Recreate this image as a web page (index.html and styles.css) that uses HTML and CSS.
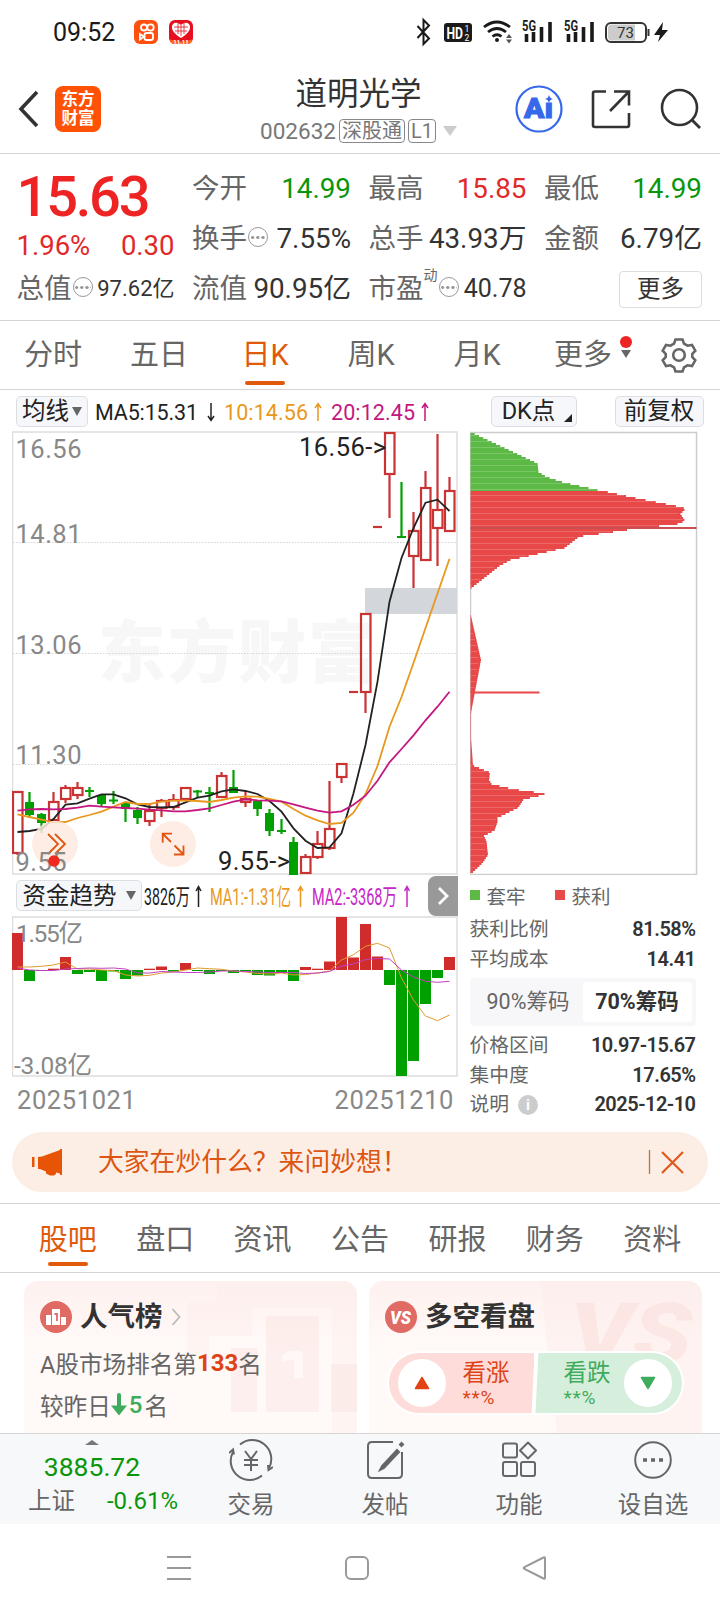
FILE: index.html
```html
<!DOCTYPE html>
<html lang="zh-CN">
<head>
  <meta charset="UTF-8">
  <meta name="viewport" content="width=device-width, initial-scale=1.0">
  <title>道明光学 002632</title>
  <link rel="stylesheet" href="styles.css">
  <script src="script.js" defer></script>
</head>
<body>
  <!-- 状态栏 -->
  <div class="status">
    <span class="time">09:52</span>
    <svg class="app-icons" width="60" height="26" viewBox="134 19 60 26">
      <rect x="134" y="20" width="24" height="24" rx="6" fill="#ff5010"/>
      <g fill="none" stroke="#fff" stroke-width="1.8">
        <circle cx="144" cy="27.5" r="3"/><circle cx="150.5" cy="27.5" r="3.2"/>
        <rect x="144.5" y="33" width="8.5" height="7" rx="2"/><path d="M144 36.5l-4-2.5v5.500z"/>
      </g>
      <rect x="169" y="20" width="24" height="24" rx="6" fill="#e60f1e"/>
      <path d="M181 38c-14-8-9-17-3.500-15 2 .5 3.500 2 3.500 2s1.500-1.500 3.500-2c5.500-2 10.500 7-3.500 15z" fill="#fff"/>
      <path d="M174 27h14M175 31h12M178 23v11M184 23v11M181 25v11" stroke="#e60f1e" stroke-width=".8"/>
      <path d="M170 39.500q11 4 22 0q0 4.500-5 4.500h-12q-5 0-5-4.500z" fill="#ff6a1c"/>
      <text x="181" y="43.500" font-size="6" font-weight="700" fill="#fff" text-anchor="middle">11.11</text>
    </svg>
    <svg class="sys-icons" width="256" height="34" viewBox="414 15 256 34">
      <path d="M417.500 26l11.500 12.500-5.500 5.500v-24l5.500 5.500-11.500 12.500" fill="none" stroke="#1a1a1a" stroke-width="2"/>
      <rect x="444" y="23" width="28" height="19" rx="3" fill="#1a1a1a"/>
      <text x="446.500" y="38.500" font-size="16" font-weight="700" fill="#fff" textLength="16.500" lengthAdjust="spacingAndGlyphs">HD</text>
      <text x="464.500" y="32" font-size="8.500" fill="#fff">1</text>
      <text x="464.500" y="41" font-size="8.500" fill="#fff">2</text>
      <g fill="none" stroke="#1a1a1a" stroke-width="2.800">
        <path d="M484 27q13-10 26 0"/><path d="M488 32q9-7 18 0"/><path d="M492.500 36.500q4.500-3.500 9 0"/>
      </g>
      <circle cx="497" cy="40" r="2" fill="#1a1a1a"/>
      <path d="M506 38l3-4 3 4zM506 39.500l3 4 3-4z" fill="#555"/>
      <g id="sig">
        <text x="522" y="31" font-size="14" font-weight="700" fill="#1a1a1a" textLength="14" lengthAdjust="spacingAndGlyphs">5G</text>
        <path d="M526.500 34v8M533.500 32v10M541.500 27v15M550 22v20" stroke="#1a1a1a" stroke-width="3.600"/>
      </g>
      <use href="#sig" x="42"/>
      <rect x="606" y="23" width="40" height="19" rx="5" fill="#fff" stroke="#333" stroke-width="2"/>
      <path d="M608 28q0-3.500 3.500-3.500h23.500v16h-23.500q-3.500 0-3.500-3.500z" fill="#ccc"/>
      <path d="M648.500 29v7" stroke="#333" stroke-width="2"/>
      <text x="617" y="38" font-size="15" fill="#333" textLength="17">73</text>
      <path d="M663 22l-9 13h6l-2 7 10-12h-6z" fill="#1a1a1a"/>
    </svg>
  </div>

  <!-- 顶部标题 -->
  <header class="header">
    <svg class="back" width="24" height="40" viewBox="0 0 24 40"><path d="M20 3L4 20 20 37" fill="none" stroke="#333" stroke-width="3.600"/></svg>
    <div class="logo">东方<br>财富</div>
    <div class="title">
      <h1>道明光学</h1>
      <div class="code">002632<span class="tag">深股通</span><span class="tag l1">L1</span><i class="tri"></i></div>
    </div>
    <svg width="194" height="50" viewBox="514 84 194 50" fill="none">
      <circle cx="539" cy="109" r="22.500" stroke="#3668ea" stroke-width="2.200"/>
      <text x="524" y="118" font-size="27" font-weight="900" fill="#3668ea" stroke="#3668ea" textLength="29" lengthAdjust="spacingAndGlyphs">Aı</text>
      <path d="M549 95q.8 3.500 4 4-3.200.5-4 4-.8-3.500-4-4 3.200-.5 4-4z" fill="#3668ea"/>
      <path d="M606 91.500h-11q-2 0-2 2v31.500q0 2 2 2h32q2 0 2-2v-12M614 91.500h15v14M628.500 92l-18.500 19" stroke="#333" stroke-width="2.600"/>
      <circle cx="679.500" cy="107.500" r="17.500" stroke="#333" stroke-width="2.600"/>
      <path d="M692 120l8 8" stroke="#333" stroke-width="2.800"/>
    </svg>
  </header>

  <!-- 行情数据 -->
  <section class="quote">
    <div class="price">
      <b>15.63</b>
      <p><span>1.96%</span><span>0.30</span></p>
    </div>
    <div class="cell"><label>今开</label><em class="green">14.99</em></div>
    <div class="cell"><label>最高</label><em class="red">15.85</em></div>
    <div class="cell"><label>最低</label><em class="green">14.99</em></div>
    <div class="cell"><label>换手<i class="dots"></i></label><em>7.55%</em></div>
    <div class="cell"><label>总手</label><em>43.93万</em></div>
    <div class="cell"><label>金额</label><em>6.79亿</em></div>
    <div class="cell"><label>总值<i class="dots"></i></label><em class="small">97.62亿</em></div>
    <div class="cell"><label>流值</label><em>90.95亿</em></div>
    <div class="cell"><label>市盈<sup>动</sup><i class="dots"></i></label><em class="mid">40.78</em></div>
    <div class="cell end"><button class="more">更多</button></div>
  </section>

  <!-- 周期 -->
  <nav class="period">
    <a>分时</a>
    <a>五日</a>
    <a class="on">日K</a>
    <a>周K</a>
    <a>月K</a>
    <a>更多<i class="tri"></i><i class="dot"></i></a>
    <svg width="36" height="36" viewBox="-18 -18 36 36" fill="none" stroke="#666" stroke-width="2.600">
      <path d="M-3.500-15.500h7l1.500 4.200 3.500 2 4.500-.8 3.300 5.800-3 3.300v3l3 3.300-3.300 5.800-4.500-.8-3.500 2-1.500 4.200h-7l-1.500-4.200-3.500-2-4.500.8-3.300-5.800 3-3.300v-3l-3-3.300 3.300-5.800 4.500.8 3.500-2z"/>
      <circle r="5.800"/>
    </svg>
  </nav>

  <!-- K线 + 筹码 -->
  <main class="charts">
    <div class="left">
      <div class="bar ma">
        <button class="pick">均线<i class="tri"></i></button>
        <svg width="346" height="30" viewBox="92 396 346 30" font-size="21.500">
          <text x="95" y="419.500" fill="#222" textLength="103">MA5:15.31</text>
          <text x="224" y="419.500" fill="#e8981e" textLength="84">10:14.56</text>
          <text x="331" y="419.500" fill="#c4177f" textLength="84">20:12.45</text>
          <path d="M211 403v17M208 416l3 4.500 3-4.500" fill="none" stroke="#222" stroke-width="1.500"/>
          <path d="M318 421v-17M315 408l3-4.500 3 4.500" fill="none" stroke="#e8981e" stroke-width="1.500"/>
          <path d="M425 421v-17M422 408l3-4.500 3 4.500" fill="none" stroke="#c4177f" stroke-width="1.500"/>
        </svg>
      </div>
      <svg class="kline" width="446" height="444" viewBox="12 431 446 444">
        <text class="mark" x="98" y="677">东方财富</text>
        <path d="M13 542.500h444M13 653.500h444M13 764.500h444" stroke="#d4d4d4" stroke-dasharray="1.500 1.500"/>
        <rect x="12.500" y="432" width="444.500" height="442" fill="none" stroke="#ddd" stroke-width="1.500"/>
        <rect x="365" y="588" width="92" height="26" fill="#d3d6db"/>
        <g id="candles"></g>
        <g id="lines"></g>
        <g fill="#e0550f">
          <circle cx="55" cy="844" r="23" fill="#fdeadf" fill-opacity=".85"/>
          <circle cx="173" cy="844" r="23" fill="#fdeadf" fill-opacity=".85"/>
          <path d="M48 834l10 10-10 10M55 834l10 10-10 10M172 833.700h-9.300v9M163 834l8 8M174 854.500h9.500v-9M183 854l-8.500-8.500" fill="none" stroke="#e0550f" stroke-width="1.800"/>
        </g>
        <g class="axis">
          <text x="15.500" y="458" textLength="66">16.56</text>
          <text x="15.500" y="543" textLength="66">14.81</text>
          <text x="15.500" y="654" textLength="66">13.06</text>
          <text x="15.500" y="764" textLength="66">11.30</text>
          <text x="15.500" y="870.500" textLength="51">9.55</text>
        </g>
        <circle cx="54" cy="861" r="5.700" fill="#f0281e"/>
        <text x="299" y="456" font-size="25.500" fill="#222" textLength="87">16.56-&gt;</text>
        <text x="218" y="869.500" font-size="25.500" fill="#222" textLength="72">9.55-&gt;</text>
      </svg>
      <div class="bar fund">
        <button class="pick">资金趋势<i class="tri"></i></button>
        <svg width="286" height="34" viewBox="142 879 286 34" font-size="23">
          <text x="144" y="904.500" fill="#222" textLength="46" lengthAdjust="spacingAndGlyphs">3826万</text>
          <text x="210" y="904.500" fill="#e8981e" textLength="81" lengthAdjust="spacingAndGlyphs">MA1:-1.31亿</text>
          <text x="312" y="904.500" fill="#c726c7" textLength="85" lengthAdjust="spacingAndGlyphs">MA2:-3368万</text>
          <path d="M198.500 907v-20M196 891l2.500-4.500 2.500 4.500" fill="none" stroke="#222" stroke-width="1.500"/>
          <path d="M300.500 907v-20M298 891l2.500-4.500 2.500 4.500" fill="none" stroke="#e8981e" stroke-width="1.500"/>
          <path d="M407 907v-20M404.500 891l2.500-4.500 2.500 4.500" fill="none" stroke="#c726c7" stroke-width="1.500"/>
        </svg>
        <button class="next"><svg width="14" height="22" viewBox="0 0 14 22"><path d="M3 3l8 8-8 8" fill="none" stroke="#fff" stroke-width="2.800"/></svg></button>
      </div>
      <svg class="flow" width="446" height="161" viewBox="12 916 446 161">
        <rect x="12.500" y="917" width="444.500" height="159" fill="none" stroke="#ddd" stroke-width="1.500"/>
        <g id="bars"></g>
        <g class="axis">
          <text x="16" y="942" textLength="67">1.55亿</text>
          <text x="14" y="1073.500" textLength="78">-3.08亿</text>
        </g>
      </svg>
      <div class="dates"><span>20251021</span><span>20251210</span></div>
    </div>

    <div class="right">
      <div class="bar opts">
        <button class="pick dk">DK点<i class="corner"></i></button>
        <button class="pick">前复权</button>
      </div>
      <svg id="chips" width="228" height="444" viewBox="469.500 431 228 444"></svg>
      <div class="legend"><span><i class="sq g"></i>套牢</span><span><i class="sq"></i>获利</span></div>
      <div class="row"><span>获利比例</span><b>81.58%</b></div>
      <div class="row"><span>平均成本</span><b>14.41</b></div>
      <div class="seg"><span>90%筹码</span><span class="on">70%筹码</span></div>
      <div class="row"><span>价格区间</span><b>10.97-15.67</b></div>
      <div class="row"><span>集中度</span><b>17.65%</b></div>
      <div class="row"><span>说明<i class="info">i</i></span><b>2025-12-10</b></div>
    </div>
  </main>

  <!-- 公告条 -->
  <div class="banner">
    <svg width="32" height="30" viewBox="31 1147 32 30" fill="#e85406">
      <path d="M32 1157h2.500v10h-2.500zM38 1157l4-.5 18-6.500v-1h2v26h-2v-1.500l-4-1v1.500l-2 1.500h-4l-4-2v-2l-6-2.500h-2z"/>
    </svg>
    <p>大家在炒什么？来问妙想！</p>
    <svg width="36" height="26" viewBox="648 1149 36 26" stroke="#e0591c" fill="none">
      <path d="M649.500 1150v24" stroke="#c4703a" stroke-width="1.300"/><path d="M662 1152l21 21M683 1152l-21 21" stroke-width="2.200"/>
    </svg>
  </div>

  <nav class="tabs">
    <a class="on">股吧</a>
    <a>盘口</a>
    <a>资讯</a>
    <a>公告</a>
    <a>研报</a>
    <a>财务</a>
    <a>资料</a>
  </nav>

  <!-- 卡片 -->
  <section class="cards">
    <div class="card">
      <svg class="bg" width="333" height="152" viewBox="24 1281 333 152" fill="#f9dcda">
        <path d="M187 1301h30v-20h140v152h-25v-125h-80v28h-43v20h-22z" fill="#fdeae8" opacity=".35"/>
        <path d="M266 1316h53v96h-53zM231 1348h26v64h-26zM331 1364h26v48h-26z" opacity=".38"/>
        <path d="M288 1351h10q5 0 5 4v23h-9v-19l-12 3v-6z" fill="#fff8f6"/>
      </svg>
      <h2>
        <svg width="32" height="32" viewBox="0 0 32 32"><circle cx="16" cy="16" r="16" fill="#e06a64"/><path d="M6 14h5v10h-5zM12 8h8v16h-8zM21 16h5v8h-5z" fill="#fff"/><path d="M14.500 13h2.500v7" fill="none" stroke="#e06a64" stroke-width="1.800"/></svg>
        人气榜
        <svg width="10" height="18" viewBox="0 0 10 18"><path d="M1.500 1l7 8-7 8" fill="none" stroke="#bbb" stroke-width="1.800"/></svg>
      </h2>
      <p>A股市场排名第<b>133</b>名</p>
      <p>较昨日<svg width="16" height="24" viewBox="0 0 16 24"><path d="M8 2v14" stroke="#3eac5c" stroke-width="4" stroke-linecap="round"/><path d="M0 12.500h16l-8 10z" fill="#3eac5c"/></svg><b class="down">5</b>名</p>
    </div>
    <div class="card">
      <svg class="bg" width="333" height="152" viewBox="369 1281 333 152">
        <path d="M540 1281h162v152h-145z" fill="#fdeae8" opacity=".45"/>
        <text x="570" y="1362" font-size="84" font-weight="900" font-style="italic" fill="#f9dcda" opacity=".5" textLength="122" lengthAdjust="spacingAndGlyphs">VS</text>
      </svg>
      <h2>
        <svg width="32" height="32" viewBox="0 0 32 32"><circle cx="16" cy="16" r="16" fill="#e06a64"/><text x="5" y="22.500" font-size="18" font-weight="900" font-style="italic" fill="#fff" textLength="21" lengthAdjust="spacingAndGlyphs">VS</text></svg>
        多空看盘
      </h2>
      <div class="vote">
        <div class="rise">
          <i><svg width="16" height="14" viewBox="0 0 16 14"><path d="M8 1.500l6.500 11h-13z" fill="#e24314" stroke="#e24314" stroke-width="1.500" stroke-linejoin="round"/></svg></i>
          <span>看涨<small>**%</small></span>
        </div>
        <div class="fall">
          <span>看跌<small>**%</small></span>
          <i><svg width="16" height="14" viewBox="0 0 16 14"><path d="M8 12.500l6.500-11h-13z" fill="#3eac5c" stroke="#3eac5c" stroke-width="1.500" stroke-linejoin="round"/></svg></i>
        </div>
      </div>
    </div>
  </section>

  <!-- 底部导航 -->
  <footer class="bottom">
    <div class="index">
      <i class="up"></i>
      <b>3885.72</b>
      <p>上证<span>-0.61%</span></p>
    </div>
    <a><svg width="44" height="42" viewBox="-22 -21 44 42"><path d="M-11-15.500A19 19 0 0 1 18 8M11 15.500A19 19 0 0 1-18-8M-22-7l4-3.500 1 5M22 7l-4.500 3-.5-5" /><path d="M-6-9l6 8 6-8M0-1v12M-7 0H7M-7 5H7"/></svg>交易</a>
    <a><svg width="44" height="42" viewBox="-22 -21 44 42"><path d="M8-18h-21q-4 0-4 4v28q0 4 4 4h26q4 0 4-4v-22"/><path d="M12-10l-15 16-2 4 4-2 15-16z" fill="#666"/><path d="M15-14l3-3" stroke-width="4"/></svg>发帖</a>
    <a><svg width="44" height="42" viewBox="-22 -21 44 42"><rect x="-16" y="-16.500" width="14" height="14" rx="2"/><rect x="-16" y="2" width="14" height="14" rx="2"/><rect x="2" y="2" width="14" height="14" rx="2"/><path d="M9-17.500l8 8-8 8-8-8z" stroke-linejoin="round"/></svg>功能</a>
    <a><svg width="44" height="42" viewBox="-22 -21 44 42"><circle r="17.800"/><path d="M-10 0h4M-2 0h4M6 0h4" stroke-width="3.600"/></svg>设自选</a>
  </footer>
  <div class="sysnav">
    <svg width="26" height="26" viewBox="0 0 26 26"><path d="M1 2h24M1 13h24M1 24h24"/></svg>
    <svg width="26" height="26" viewBox="0 0 26 26"><rect x="2" y="2" width="22" height="22" rx="5"/></svg>
    <svg width="26" height="26" viewBox="0 0 26 26"><path d="M22.500 2.500q1.500-.8 1.500 1v19q0 1.800-1.500 1l-19-9.500q-1.500-1 0-2z"/></svg>
  </div>
</body>
</html>
```
FILE: styles.css
```css
*{
  box-sizing: border-box; margin: 0; padding: 0;
}
body{
  width: 720px; height: 1612px; overflow: hidden;
  display: flex; flex-direction: column;
  font-family: Roboto, "Noto Sans CJK SC", sans-serif;
  color: #333; background-color: #fff;
}
svg{
  display: block; flex: none;
}
button{
  font: inherit; color: inherit; border: 0; background: none;
}
i, em{
  font-style: normal;
}
.red{ color: #e02a2a; }
.green{ color: #0a960a; }
.tri{
  display: inline-block; width: 0; height: 0;
  border: 5px solid transparent; border-top: 9px solid #666; border-bottom: 0;
}

/* 状态栏 */
.status{
  height: 64px; padding: 0 50px 0 53px;
  display: flex; align-items: center;
}
.time{
  width: 81px; padding-top: 2px; font-size: 25px; line-height: 30px; color: #1a1a1a;
}
.sys-icons{
  margin-left: auto;
}

/* 标题 */
.header{
  height: 90px; padding: 0 12px 0 17px;
  display: flex; align-items: center;
  border-bottom: 1px solid #d5d5d5;
}
.logo{
  width: 46px; height: 46px; margin-left: 14px; padding-top: 4px;
  border-radius: 8px; background-color: #ff5207; color: #fff;
  font-size: 16.500px; font-weight: bold; line-height: 19px; text-align: center;
}
.title{
  flex: 1; padding: 4px 0 0 102px;
  display: flex; flex-direction: column; align-items: center;
}
.title h1{
  font-size: 31.500px; font-weight: normal; line-height: 40px;
}
.code{
  display: flex; align-items: center; height: 32px;
  font-size: 22.500px; color: #777; white-space: nowrap;
}
.tag{
  height: 24px; margin-left: 3px; padding: 0 2px;
  border: 1.500px solid #888; border-radius: 4px;
  font-size: 20px; line-height: 22px;
}
.code .tri{
  margin-left: 7px; border-width: 10px 7px 0; border-top-color: #ccc;
}

/* 行情 */
.quote{
  height: 167px; padding: 10px 16px 0 16.500px;
  display: grid; grid-template-columns: 158px 159px 158px 158px;
  grid-auto-rows: 50px; column-gap: 17.500px;
  border-bottom: 1px solid #d5d5d5;
}
.price{
  grid-row: span 2; color: #e02a2a;
}
.price b{
  display: block; height: 60px; padding-top: 3px;
  font-size: 56px; font-weight: 500; line-height: 60px; color: #ee2424;
  letter-spacing: -2.200px;
}
.price p{
  display: flex; justify-content: space-between;
  margin-top: 5px; font-size: 27.500px; line-height: 34px;
}
.cell{
  display: flex; align-items: center; justify-content: space-between;
  white-space: nowrap; line-height: 36px;
}
.cell label{
  display: flex; align-items: center;
  font-size: 27.500px; color: #666;
}
.cell em{
  font-size: 27.800px;
}
.cell em.small{ font-size: 22px; }
.cell em.mid{ font-size: 25px; }
.cell.end{
  justify-content: flex-end;
}
.cell sup{
  font-size: 14px; line-height: 14px; align-self: flex-start; margin-top: -3px;
}
.dots{
  width: 20px; height: 20px; margin: -4px 0 0 1px;
  border: 1.500px solid #999; border-radius: 50%;
  background: radial-gradient(circle, #999 1.300px, transparent 1.800px) 0 50% / 5.200px 5px repeat-x content-box;
  padding: 0 0.700px;
}
.more{
  width: 83px; height: 37px; border: 1px solid #ddd; border-radius: 4px;
  font-size: 23.500px; line-height: 34px;
}

/* 周期 */
.period{
  height: 69px; display: flex; align-items: center;
  border-bottom: 1px solid #d5d5d5;
  font-size: 29px; line-height: 72px; color: #666;
}
.period a{
  width: 106px; text-align: center;
}
.period a, .tabs a{
  position: relative;
}
.period svg{
  margin-left: 25px;
}
.period .on, .tabs .on{
  color: #e15a0c;
}
.period .on::after, .tabs .on::after{
  content: ""; position: absolute; left: 50%; bottom: 6px;
  width: 40px; height: 4px; margin-left: -20px;
  border-radius: 2px; background-color: #e15a0c;
}
.period .tri{
  position: absolute; right: 17px; top: 31px; margin-right: -12px; border-width: 8px 5px 0;
}
.dot{
  position: absolute; right: 5px; top: 17px; margin-right: -1px;
  width: 12px; height: 12px; border-radius: 50%; background-color: #ee2424;
}

/* 图表 */
.charts{
  display: flex; height: 742px; padding-left: 12px;
}
.left{
  width: 446px;
}
.right{
  width: 235px; margin-left: 11.500px;
}
.bar{
  height: 41px; display: flex; align-items: center;
}
.pick{
  height: 31px; border: 1px solid #dcdee2; border-radius: 5px;
  background-color: #f6f7fa; color: #222;
  display: flex; align-items: center; justify-content: center;
  font-size: 23.500px; line-height: 28px; white-space: nowrap;
}
.ma, .opts{
  padding-top: 1px;
}
.ma .pick{
  width: 72px; margin: 0 4px;
}
.ma .tri{
  margin-left: 3px;
}
.axis text{
  font-size: 25.500px; fill: #888;
}
.flow .axis text{
  font-size: 24.500px;
}
.mark{
  font-size: 68px; font-weight: 900; fill: #f7f7f7; letter-spacing: 2px;
}
.fund .pick{
  width: 126px; margin: 0 0 0 4px;
}
.fund .tri{
  margin-left: 9px;
}
.next{
  width: 30px; height: 40px; border-radius: 8px 0 0 8px; background-color: #999;
  display: flex; align-items: center; justify-content: center;
}
.dates{
  display: flex; justify-content: space-between;
  padding: 6px 4px 0 5px; font-size: 25.500px; line-height: 34px;
  letter-spacing: .6px; color: #888;
}
.opts{
  padding-right: 1px; justify-content: space-between;
}
.dk{
  position: relative; width: 86px; margin-left: 21px; padding-right: 10px;
}
.opts .pick:last-child{
  width: 89px; margin-right: 0;
}
.corner{
  position: absolute; right: 4px; bottom: 4px;
  border-left: 8px solid transparent; border-bottom: 8px solid #222;
}
.legend{
  display: flex; height: 40px; align-items: center;
  font-size: 19.500px; color: #666;
}
.legend span{
  width: 85px; display: flex; align-items: center;
}
.sq{
  width: 10px; height: 10px; margin-right: 7px; background-color: #e84848;
}
.sq.g{
  background-color: #5cb946;
}
.row{
  width: 226px; height: 29.500px; display: flex; align-items: center; justify-content: space-between;
  font-size: 19.800px; line-height: 29px; color: #666;
}
.row span{
  display: flex; align-items: center;
}
.row b{
  font-size: 20px; font-weight: 600; letter-spacing: -.5px; color: #333;
}
.info{
  width: 20px; height: 20px; margin-left: 9px; border-radius: 50%;
  background-color: #ccc; color: #fff;
  font-size: 15px; font-weight: bold; line-height: 20px; text-align: center;
}
.seg{
  width: 226px; height: 48px; margin: 4px 0 5px; padding: 4px;
  display: flex; border-radius: 4px; background-color: #f7f7fa;
  font-size: 21.500px; line-height: 40px; text-align: center; color: #666;
}
.seg span{
  flex: 1; white-space: nowrap;
}
.seg .on{
  border-radius: 4px; background-color: #fff; color: #333; font-weight: bold;
}

/* 公告条 */
.banner{
  height: 60px; margin: 0 12px 11px; padding: 0 24px 0 19px;
  display: flex; align-items: center;
  border-radius: 30px; background-color: #fceee5;
}
.banner p{
  flex: 1; margin-left: 35px; font-size: 25.800px; line-height: 36px; color: #dd5510;
}

.tabs{
  height: 70px; padding: 0 19px;
  display: flex; border: 1px solid #d5d5d5; border-width: 1px 0;
  font-size: 29px; line-height: 73px; color: #666;
}
.tabs a{
  flex: 1; text-align: center;
}

/* 卡片 */
.cards{
  height: 160px; padding: 8px 18px 0 24px; overflow: hidden;
  display: flex; gap: 12px;
}
.card{
  position: relative; width: 333px; height: 170px; padding: 16px;
  border-radius: 14px; overflow: hidden;
  background: linear-gradient(#fef1ef, #fffaf8 70px);
}
.bg{
  position: absolute; left: 0; top: 0;
}
.card h2{
  position: relative; display: flex; align-items: center; gap: 8px;
  height: 40px; font-size: 27.500px; line-height: 42px;
}
.card p{
  position: relative; display: flex; align-items: center;
  height: 42px; font-size: 23.600px; color: #666;
}
.card h2 + p{
  margin-top: 5px;
}
.card b{
  font-size: 24px; font-weight: bold; color: #dd4315;
}
.card b.down{
  margin: 0 2px; font-weight: 500; color: #3eac5c;
}
.vote{
  position: relative; display: flex; width: 297px; height: 64px; margin: 14px 0 0 2px;
  border: 2px solid #fff; border-radius: 32px; overflow: hidden; background-color: #fff;
}
.rise, .fall{
  display: flex; align-items: center; justify-content: space-between;
  width: 147px; height: 60px; padding: 0 25px 0 9px;
  background-color: #fddcda; color: #dd4315;
  clip-path: polygon(0 0, 100% 0, 98% 100%, 0 100%);
}
.fall{
  width: 148px; padding: 0 10px 0 28px; margin-left: 1px;
  background-color: #d6efdc; color: #3eac5c;
  clip-path: polygon(2% 0, 100% 0, 100% 100%, 0 100%);
}
.vote i{
  width: 48px; height: 48px; border-radius: 50%; background-color: #fff;
  display: flex; align-items: center; justify-content: center;
}
.vote span{
  font-size: 23.500px; line-height: 30px;
}
.vote small{
  display: block; font-size: 19px; line-height: 20px; letter-spacing: .8px;
}

/* 底部 */
.bottom{
  height: 91px; display: flex;
  border-top: 1px solid #d5d5d5; background-color: #f7f8fa; color: #666;
}
.index{
  width: 184px; padding-top: 6px; text-align: center;
}
.up{
  display: block; width: 0; margin: 0 auto;
  border: 7px solid transparent; border-bottom: 5px solid #777; border-top: 0;
}
.index b{
  display: block; margin-top: 6px; font-size: 26.500px; font-weight: normal; line-height: 32px; color: #0a960a;
}
.index p{
  display: flex; justify-content: space-between; padding: 0 6px 0 28px;
  font-size: 23.500px; line-height: 36px;
}
.index span{
  font-size: 24px; color: #0a960a;
}
.bottom a{
  width: 134px; padding-top: 5px;
  display: flex; flex-direction: column; align-items: center;
  font-size: 23.500px; line-height: 48px;
}
.bottom a svg{
  fill: none; stroke: #666; stroke-width: 2;
}
.sysnav{
  flex: 1; display: flex; justify-content: space-between;
  padding: 31px 173px 0 166px;
}
.sysnav svg{
  fill: none; stroke: #999; stroke-width: 2;
}
```
FILE: script.js
```js
const RED = "#c93333";
const GREEN = "#00a000";
const STEP = 12;
const X0 = 17.5;

/* K线: [颜色, 最高, 实体上, 实体下, 最低] */
const candles = [
  ["r", 792, 792, 853, 855], ["g", 792, 802, 815, 818], ["g", 813, 814, 823, 833],
  ["r", 792, 802, 820, 820], ["r", 785, 788, 799, 803], ["r", 782, 788, 795, 799],
  ["g", 787, 790, 792, 797], ["g", 794, 795, 804, 806], ["g", 791, 800, 801, 804],
  ["g", 802, 803, 809, 822], ["g", 807, 810, 818, 824], ["r", 803, 811, 821, 826],
  ["r", 799, 801, 808, 817], ["r", 794, 800, 807, 810], ["r", 787, 788, 799, 799],
  ["g", 790, 791, 792, 797], ["g", 787, 792, 794, 812], ["r", 772, 776, 797, 797],
  ["g", 770, 787, 793, 793], ["r", 792, 799, 802, 807], ["g", 801, 801, 809, 816],
  ["g", 809, 813, 831, 836], ["g", 819, 830, 832, 834], ["g", 837, 842, 875, 875],
  ["r", 854, 857, 873, 873], ["r", 831, 844, 857, 859], ["r", 781, 829, 848, 850],
  ["r", 764, 764, 777, 783], ["r", 692, 692, 692, 692], ["r", 614, 614, 692, 713],
  ["r", 527, 527, 527, 527], ["r", 433, 433, 474, 518], ["g", 482, 536, 538, 538],
  ["r", 512, 531, 556, 588], ["r", 471, 488, 560, 560], ["r", 434, 510, 528, 566],
  ["r", 477, 491, 531, 531]
];
const ma5 = [832,831,829,819,804.7,803.3,798.7,794.3,794.3,798.3,804.3,807,807.3,807,802.3,797.7,795.7,791.3,789.3,791,794,801,811.7,828.3,840.7,848,847.3,833.3,793.3,745,681.7,601.7,558,528,502.7,499.7,511];
const ma10 = [814.3,817,819.7,822.3,822,818,815,811.7,806.7,802,804,804,801.7,800.7,800.7,801,802,800,797.7,796.3,796.7,799,801.7,809,815.7,820.3,824,823,812.7,794,766,726.7,697,663,628,593.5,558.7];
const ma20 = [810.7,809.3,809,809.3,809,807.7,805.7,806.7,807.3,808,808.7,809.7,810.3,811.3,811.3,810,808.3,805,801.7,799.3,800.3,800.7,801.3,804.3,807.7,810.7,812.7,811.3,804.7,795.7,780.7,762.3,749,735.3,720.3,706.7,691.7];

/* 资金趋势 */
const ZERO = 970;
const flow = [933,981,971,968.7,957,974,972,981,971.5,979,975.5,968.7,966.5,971.5,963,971,974,971,973,971.5,975,975.5,973,981,967,968.7,961.5,917,957.5,924,956.5,985,1076,1061,1004,978,957];
const flow1 = [967,967,966.3,965,962,969,969,970,970.5,975,976,975.3,973,972,970,968,968.7,969.3,971,972,973.5,974,973,975,974.5,973,971,960,954.7,946.3,943.3,948,978,1000,1016,1020.7,1015];
const flow2 = [968,970,970.5,970.5,969,968.5,968,968.3,968,969,973,973,971.5,972,972.5,972.5,972,971,971,971.5,972,972.5,972.5,972.5,973.5,973,971.5,966,964,959.5,958.5,959,970,977,981.3,982.3,981.3];

/* 筹码分布轮廓: [y, 长度] */
const profile = [
  [432.5,1],[463.5,67],[472,68],[477,76],[482.5,93],[488,118],[490,127],[491.5,135],[497,160],[507.5,213],[510,214],
  [514,210],[521,214.5],[524,207],[525.7,191],[529.5,160],[533.5,132],[536.5,109],[548,94],[554.5,65],[560,40],[566,29],
  [588,1],[589,0],[615,0],[616,.5],[660,10.5],[713,.5],[738,.5],[765.5,2.5],[772.5,19.5],[780,18.5],[784,21],[787.5,35],
  [790.5,51],[793.5,75.5],[796,68],[799.5,53],[807.5,48],[818,27],[822,27],[830.5,24],[836,13.5],[841.5,16],[855,17.5],
  [863,12],[873.5,1]
];

const line = (data, color, w) =>
  `<polyline points="${data.map((y, i) => X0 + i * STEP + "," + y).join(" ")}" fill="none" stroke="${color}" stroke-width="${w}"/>`;

document.getElementById("candles").innerHTML = candles.map(([c, hi, top, low, lo], i) => {
  const x = X0 + i * STEP;
  const color = c === "r" ? RED : GREEN;
  if (low - top < 3 && (c === "g" || low === top)) {
    return `<path d="M${x - 4.5} ${(top + low) / 2}h9M${x} ${hi}V${lo}" stroke="${color}" stroke-width="2.2"/>`;
  }
  const wick = `<path d="M${x} ${hi}V${top}M${x} ${low}V${lo}" stroke="${color}" stroke-width="2.2"/>`;
  if (c === "r") {
    return wick + `<rect x="${x - 4.5}" y="${top}" width="9.5" height="${low - top}" fill="none" stroke="${color}" stroke-width="2.2"/>`;
  }
  return wick + `<rect x="${x - 4.5}" y="${top}" width="9" height="${low - top}" fill="${color}"/>`;
}).join("");

document.getElementById("lines").innerHTML =
  line(ma5, "#222", 1.8) + line(ma10, "#e8981e", 1.8) + line(ma20, "#c4177f", 1.8);

document.getElementById("bars").innerHTML = flow.map((y, i) =>
  `<rect x="${12 + i * STEP}" y="${Math.min(y, ZERO)}" width="11" height="${Math.abs(y - ZERO)}" fill="${y < ZERO ? "#d02c2c" : GREEN}"/>`
).join("") + line(flow1, "#dd9c2e", 1) + line(flow2, "#c040c0", 1);

/* 筹码 */
function lengthAt(y){
  for (let i = 1; i < profile.length; i++) {
    const [y1, v1] = profile[i - 1];
    const [y2, v2] = profile[i];
    if (y <= y2) return v1 + (v2 - v1) * (y - y1) / (y2 - y1);
  }
  return 0;
}
let chips = `<rect x="470" y="432.500" width="226" height="442" fill="none" stroke="#ccc" stroke-width="1.500"/>`;
for (let y = 433; y < 873; y += 2) {
  const color = y < 490 ? "#5cb946" : "#e84848";
  const w = lengthAt(y + 1);
  chips += `<rect x="470" y="${y}" width="${w.toFixed(1)}" height="2" fill="${color}"/>`;
  if (y % 3 === 0) chips += `<rect x="470" y="${y}" width="${Math.max(0, w - 2).toFixed(1)}" height="1" fill="#fff" opacity=".18"/>`;
}
chips += `<path d="M470 528h226" stroke="#c85050" stroke-width="2"/><path d="M470 692.500h69" stroke="#e84848" stroke-width="2"/>`;
document.getElementById("chips").innerHTML = chips;
```
